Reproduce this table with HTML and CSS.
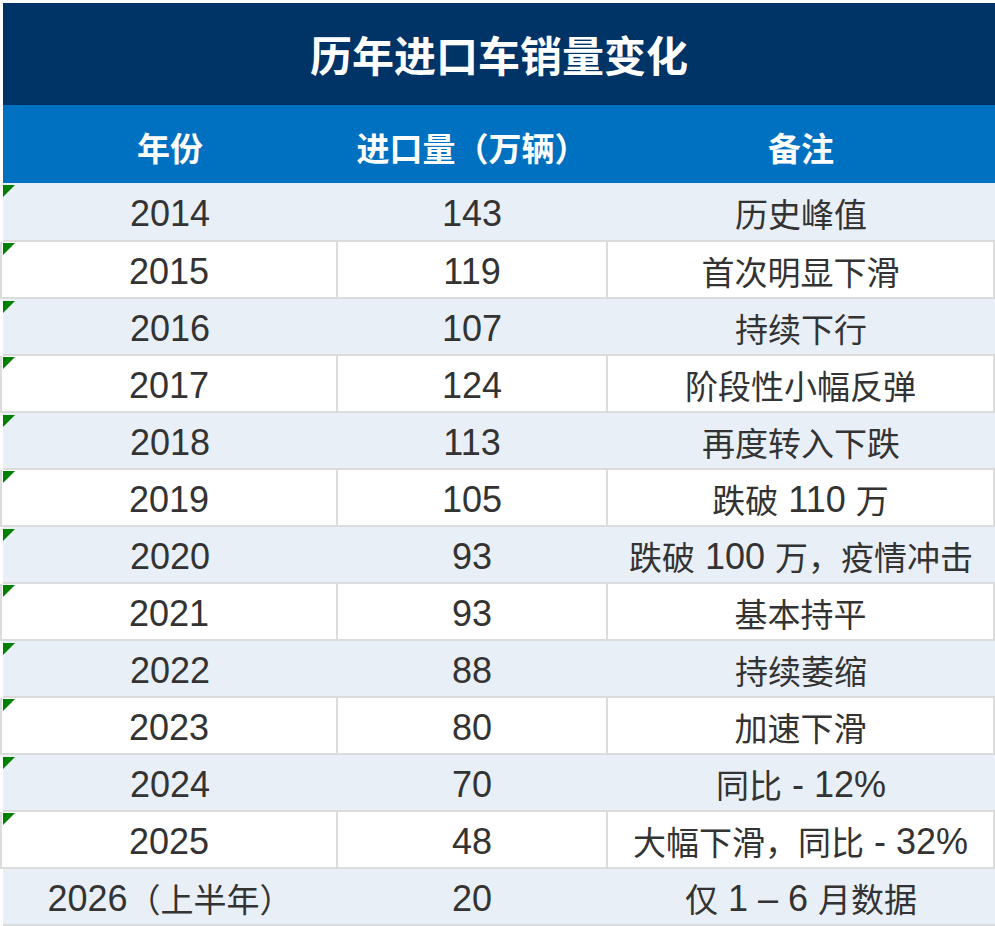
FILE: index.html
```html
<!DOCTYPE html>
<html lang="zh-CN">
<head>
<meta charset="utf-8">
<title>历年进口车销量变化</title>
<link rel="stylesheet" href="styles.css">
</head>
<body>
<div class="sheet">
  <div class="title">历年进口车销量变化</div>
  <div class="head">
    <div class="hc">年份</div>
    <div class="hc">进口量（万辆）</div>
    <div class="hc">备注</div>
  </div>
  <div class="rows">
    <div class="row alt first">
      <div class="c mark"><span class="n">2014</span></div>
      <div class="c"><span class="n">143</span></div>
      <div class="c">历史峰值</div>
    </div>
    <div class="row plain">
      <div class="c mark"><span class="n">2015</span></div>
      <div class="c"><span class="n">119</span></div>
      <div class="c">首次明显下滑</div>
    </div>
    <div class="row alt">
      <div class="c mark"><span class="n">2016</span></div>
      <div class="c"><span class="n">107</span></div>
      <div class="c">持续下行</div>
    </div>
    <div class="row plain">
      <div class="c mark"><span class="n">2017</span></div>
      <div class="c"><span class="n">124</span></div>
      <div class="c">阶段性小幅反弹</div>
    </div>
    <div class="row alt">
      <div class="c mark"><span class="n">2018</span></div>
      <div class="c"><span class="n">113</span></div>
      <div class="c">再度转入下跌</div>
    </div>
    <div class="row plain">
      <div class="c mark"><span class="n">2019</span></div>
      <div class="c"><span class="n">105</span></div>
      <div class="c">跌破<span class="n"> 110 </span>万</div>
    </div>
    <div class="row alt">
      <div class="c mark"><span class="n">2020</span></div>
      <div class="c"><span class="n">93</span></div>
      <div class="c">跌破<span class="n"> 100 </span>万，疫情冲击</div>
    </div>
    <div class="row plain">
      <div class="c mark"><span class="n">2021</span></div>
      <div class="c"><span class="n">93</span></div>
      <div class="c">基本持平</div>
    </div>
    <div class="row alt">
      <div class="c mark"><span class="n">2022</span></div>
      <div class="c"><span class="n">88</span></div>
      <div class="c">持续萎缩</div>
    </div>
    <div class="row plain">
      <div class="c mark"><span class="n">2023</span></div>
      <div class="c"><span class="n">80</span></div>
      <div class="c">加速下滑</div>
    </div>
    <div class="row alt">
      <div class="c mark"><span class="n">2024</span></div>
      <div class="c"><span class="n">70</span></div>
      <div class="c">同比<span class="n"> - 12%</span></div>
    </div>
    <div class="row plain">
      <div class="c mark"><span class="n">2025</span></div>
      <div class="c"><span class="n">48</span></div>
      <div class="c">大幅下滑，同比<span class="n"> - 32%</span></div>
    </div>
    <div class="row alt">
      <div class="c"><span class="n">2026</span>（上半年）</div>
      <div class="c"><span class="n">20</span></div>
      <div class="c">仅<span class="n"> 1 – 6 </span>月数据</div>
    </div>
  </div>
</div>
</body>
</html>
```

FILE: styles.css
```css
html, body {
  margin: 0;
  padding: 0;
  background: #ffffff;
}

.sheet {
  width: 995px;
  padding-top: 3px;
  font-family: "Noto Sans CJK SC", "Liberation Sans", sans-serif;
}

.title {
  margin-left: 3px;
  height: 102px;
  background: #003366;
  color: #ffffff;
  font-size: 42px;
  font-weight: 700;
  line-height: 1;
  display: flex;
  align-items: center;
  justify-content: center;
}

.head {
  margin-left: 3px;
  height: 78px;
  background: #0070c0;
  display: grid;
  grid-template-columns: 334px 270px 1fr;
}

.hc {
  display: flex;
  align-items: center;
  justify-content: center;
  padding-top: 6px;
  color: #ffffff;
  font-size: 33px;
  font-weight: 700;
  line-height: 1;
}

.row {
  display: grid;
  height: 55px;
  border-bottom: 2px solid #dcdcdc;
}

.row.first {
  height: 57px;
}

.row.alt {
  margin-left: 3px;
  background: #e9eff7;
  grid-template-columns: 334px 270px 1fr;
}

.row.plain {
  background: #dcdcdc;
  padding: 0 2px;
  column-gap: 2px;
  grid-template-columns: 334px 268px 1fr;
}

.row.plain .c {
  background: #ffffff;
}

.c {
  position: relative;
  display: flex;
  align-items: center;
  justify-content: center;
  padding-top: 4px;
  color: #333333;
  font-size: 33px;
  line-height: 1;
  white-space: pre;
}

.n {
  font-family: "Liberation Sans", "Noto Sans CJK SC", sans-serif;
  font-size: 36px;
}

.mark::before {
  content: "";
  position: absolute;
  left: 0;
  top: 2px;
  width: 0;
  height: 0;
  border-top: 12px solid #008000;
  border-right: 12px solid transparent;
}

.row.plain .mark::before {
  left: 1px;
  top: 1px;
}
```
